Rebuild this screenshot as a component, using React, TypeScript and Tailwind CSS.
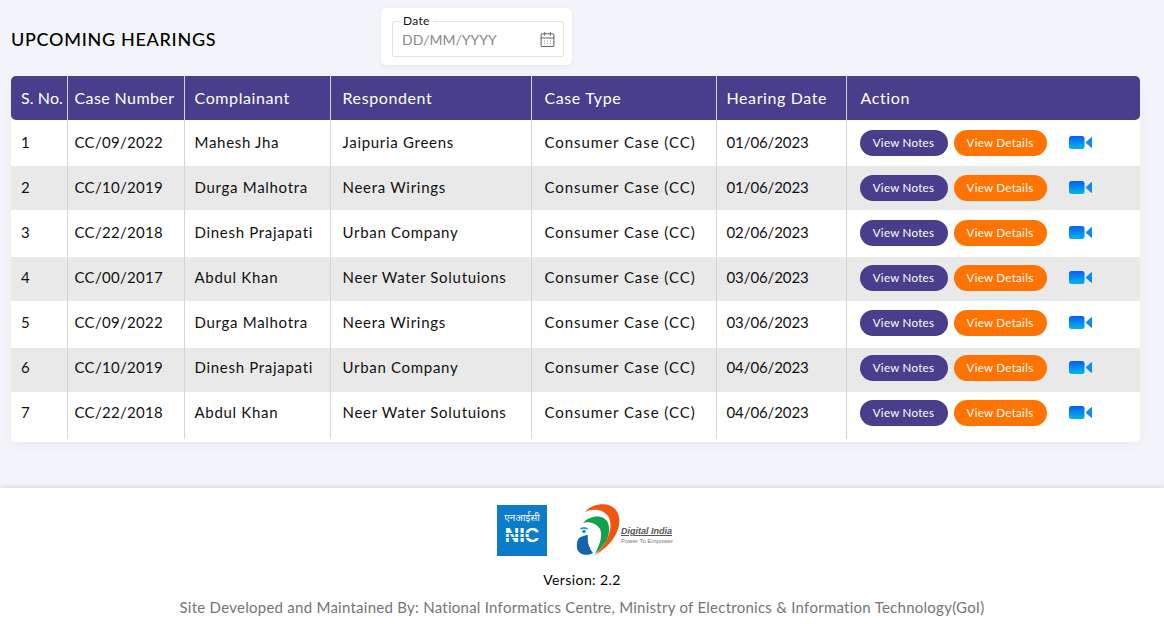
import React from 'react';
import { CalendarDays } from 'lucide-react';

const rows = [
  { no: '1', caseNo: 'CC/09/2022', complainant: 'Mahesh Jha', respondent: 'Jaipuria Greens', date: '01/06/2023', size: 'h-[46px] pt-[10px]' },
  { no: '2', caseNo: 'CC/10/2019', complainant: 'Durga Malhotra', respondent: 'Neera Wirings', date: '01/06/2023', size: 'h-[44px] pt-[9px]' },
  { no: '3', caseNo: 'CC/22/2018', complainant: 'Dinesh Prajapati', respondent: 'Urban Company', date: '02/06/2023', size: 'h-[47px] pt-[10px]' },
  { no: '4', caseNo: 'CC/00/2017', complainant: 'Abdul Khan', respondent: 'Neer Water Solutuions', date: '03/06/2023', size: 'h-[44px] pt-[8px]' },
  { no: '5', caseNo: 'CC/09/2022', complainant: 'Durga Malhotra', respondent: 'Neera Wirings', date: '03/06/2023', size: 'h-[47px] pt-[9px]' },
  { no: '6', caseNo: 'CC/10/2019', complainant: 'Dinesh Prajapati', respondent: 'Urban Company', date: '04/06/2023', size: 'h-[44px] pt-[7px]' },
  { no: '7', caseNo: 'CC/22/2018', complainant: 'Abdul Khan', respondent: 'Neer Water Solutuions', date: '04/06/2023', size: 'h-[47px] pt-[8px]' },
];

const VideoIcon = ({ id }: { id: string }) => (
  <svg width="23" height="14" viewBox="0 0 23 14">
    <defs>
      <linearGradient id={id} x1="0" y1="0" x2="0" y2="1">
        <stop offset="0" stopColor="#0a5cf5" />
        <stop offset="1" stopColor="#00b8e8" />
      </linearGradient>
    </defs>
    <rect x="0" y="0" width="15.5" height="13" rx="2.5" fill={`url(#${id})`} />
    <path d="M17 6.5 L22.5 1.5 V11.5 Z" fill="#0a8cf0" stroke="#0a8cf0" strokeWidth="1" strokeLinejoin="round" />
  </svg>
);

const NicLogo = () => (
  <div className="w-[50px] h-[51px] bg-[#0b7cc9] flex flex-col items-center justify-center pb-[4px] text-white">
    <span className="text-[10px] leading-[14px] font-['Noto_Sans','Liberation_Sans',sans-serif]">एनआईसी</span>
    <span className="relative text-[20px] leading-[23px] font-black font-['Liberation_Sans',sans-serif]">
      NIC
      {/* stripes across the letters */}
      <span className="absolute left-0 right-0 top-[9px] h-px bg-[#0b7cc9]" />
      <span className="absolute left-0 right-0 top-[13px] h-px bg-[#0b7cc9]" />
    </span>
  </div>
);

const DigitalIndiaLogo = () => (
  <div className="flex items-start">
    <svg width="46" height="52" viewBox="0 0 46 52">
      <path d="M9 8 C16 -1 33 -3 40 6 C48 17 42 38 19 51 C33 38 38 21 32 12 C27 5 17 4 9 8 Z" fill="#f0560f" />
      <path d="M7 19 C14 11 28 10 32 19 C36 29 30 41 19 50 C24 40 27 31 24 25 C21 20 13 17 7 19 Z" fill="#12a24b" />
      <path d="M3 34 C6 32 10 31 12 31 C11 38 13 44 17 49 C10 53 2 50 1 44 C0.5 40 1 37 3 34 Z" fill="#1565ad" />
      <circle cx="8" cy="27.5" r="1.8" fill="#1a8fd0" />
      <path d="M4 24.5 C6.5 22.5 9.5 22.5 12 24.5 L11 25.8 C9 24.3 7 24.3 5 25.8 Z" fill="#1a8fd0" />
    </svg>
    <div className="flex flex-col w-[51px] -ml-[1px] mt-[22px] whitespace-nowrap">
      <span className="text-[9px] leading-[11px] font-bold italic text-[#555] underline font-['Liberation_Sans',sans-serif]">Digital India</span>
      <span className="text-[6px] leading-[8px] text-[#777] font-['Liberation_Sans',sans-serif]">Power To Empower</span>
    </div>
  </div>
);

export default function App() {
  return (
    <div className="w-[1164px] h-[624px] overflow-hidden bg-[#f3f4fa] font-['Lato',sans-serif] text-[#111]">
      <div className="h-[488px] pl-[11px] pr-[24px] pt-[8px]">
        <div className="flex h-[57px] items-start">
          <h1 className="w-[370px] pt-[20px] text-[18px] leading-[22px] font-medium tracking-[0.7px] text-black">UPCOMING HEARINGS</h1>
          <div className="w-[191px] h-[57px] bg-white rounded-[5px] shadow-[0_1px_4px_rgba(0,0,0,0.06)] pl-[11px] pr-[8px] pt-[13px]">
            <div className="relative h-[36px] border border-[#e3e3e3] rounded-[2px] flex items-center justify-between pl-[9px] pr-[7px]">
              <span className="absolute -top-[8px] left-[7px] bg-white px-[3px] text-[12px] leading-[14px] tracking-[0.3px] text-[#111]">Date</span>
              <span className="text-[14px] text-[#8a8a8a]">DD/MM/YYYY</span>
              <CalendarDays className="w-[17px] h-[17px] text-[#666]" strokeWidth={1.5} />
            </div>
          </div>
        </div>

        <div className="mt-[11px] bg-white rounded-[5px] pb-[3px] shadow-[0_4px_14px_rgba(0,0,0,0.03)]">
          <table className="w-full table-fixed border-collapse">
            <colgroup>
              <col className="w-[56px]" />
              <col className="w-[117px]" />
              <col className="w-[146px]" />
              <col className="w-[201px]" />
              <col className="w-[185px]" />
              <col className="w-[130px]" />
              <col />
            </colgroup>
            <thead>
              <tr className="h-[44px] bg-[#483e8b] text-white text-[16px] tracking-[0.6px] text-left">
                <th className="font-normal pl-[10px] tracking-[0.1px] rounded-l-[5px] border-r border-[#d5d5d5]">S. No.</th>
                <th className="font-normal pl-[7px] tracking-[0.4px] border-r border-[#d5d5d5]">Case Number</th>
                <th className="font-normal pl-[10px] border-r border-[#d5d5d5]">Complainant</th>
                <th className="font-normal pl-[12px] border-r border-[#d5d5d5]">Respondent</th>
                <th className="font-normal pl-[13px] border-r border-[#d5d5d5]">Case Type</th>
                <th className="font-normal pl-[10px] border-r border-[#d5d5d5]">Hearing Date</th>
                <th className="font-normal pl-[14px] rounded-r-[5px]">Action</th>
              </tr>
            </thead>
            <tbody>
              {rows.map((r, i) => (
                <tr key={r.no} className={`${i % 2 === 1 ? 'bg-[#e9e9e9]' : 'bg-white'} text-[15px] leading-[24px] tracking-[0.7px] text-[#111] align-top`}>
                  <td className={`${r.size} pl-[10px] border-r border-[#d5d5d5]`}>{r.no}</td>
                  <td className={`${r.size} pl-[7px] tracking-[0.3px] border-r border-[#d5d5d5]`}>{r.caseNo}</td>
                  <td className={`${r.size} pl-[10px] border-r border-[#d5d5d5]`}>{r.complainant}</td>
                  <td className={`${r.size} pl-[12px] border-r border-[#d5d5d5]`}>{r.respondent}</td>
                  <td className={`${r.size} pl-[13px] tracking-[0.95px] border-r border-[#d5d5d5]`}>Consumer Case (CC)</td>
                  <td className={`${r.size} pl-[10px] tracking-[-0.1px] border-r border-[#d5d5d5]`}>{r.date}</td>
                  <td className={`${r.size} pl-[13px]`}>
                    <div className="flex items-center">
                      <button className="w-[88px] h-[26px] rounded-full bg-[#483e8b] text-white text-[11.5px] tracking-[0.3px]">View Notes</button>
                      <button className="ml-[6px] w-[93px] h-[26px] rounded-full bg-[#ff7300] text-white text-[11.5px] tracking-[0.3px]">View Details</button>
                      <span className="ml-[22px] flex"><VideoIcon id={`video-${r.no}`} /></span>
                    </div>
                  </td>
                </tr>
              ))}
            </tbody>
          </table>
        </div>
      </div>

      <footer className="h-[136px] bg-white shadow-[0_-1px_5px_rgba(0,0,0,0.12)] flex flex-col items-center pt-[16px]">
        <div className="flex items-start h-[52px] ml-[5px]">
          <div className="mt-[1px]"><NicLogo /></div>
          <div className="ml-[29px]"><DigitalIndiaLogo /></div>
        </div>
        <p className="mt-[15px] text-[14px] leading-[18px] tracking-[0.4px] text-black">Version: 2.2</p>
        <p className="mt-[9px] text-[15px] leading-[18px] tracking-[0.26px] text-[#757575]">Site Developed and Maintained By: National Informatics Centre, Ministry of Electronics &amp; Information Technology(GoI)</p>
      </footer>
    </div>
  );
}
